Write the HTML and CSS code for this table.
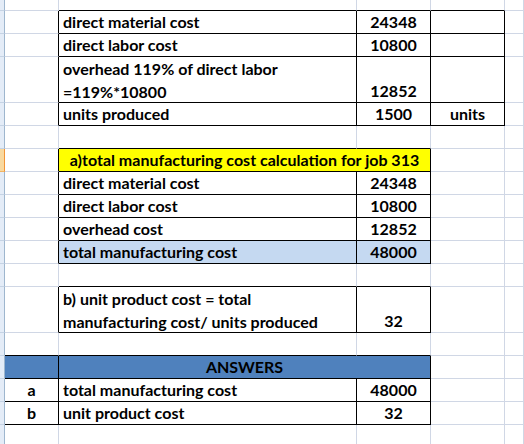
FILE: index.html
```html
<!DOCTYPE html>
<html lang="en">
<head>
    <meta charset="UTF-8">
    <title>Job 313 cost sheet</title>
    <link rel="stylesheet" href="styles.css">
</head>
<body>
    <div class="sheet">
        <!-- row 0 (scrolled, partly hidden) -->
        <div class="c rh"></div>
        <div class="c"></div>
        <div class="c bb"></div>
        <div class="c bb"></div>
        <div class="c bb"></div>
        <div class="c"></div>

        <!-- input data -->
        <div class="c rh"></div>
        <div class="c br"></div>
        <div class="c br bb">direct material cost</div>
        <div class="c br bb num">24348</div>
        <div class="c br bb"></div>
        <div class="c"></div>

        <div class="c rh"></div>
        <div class="c br"></div>
        <div class="c br bb">direct labor cost</div>
        <div class="c br bb num">10800</div>
        <div class="c br bb"></div>
        <div class="c"></div>

        <div class="c rh"></div>
        <div class="c br"></div>
        <div class="c br bb"><span class="lines">overhead 119% of direct labor<br>=119%*10800</span></div>
        <div class="c br bb num">12852</div>
        <div class="c br bb"></div>
        <div class="c"></div>

        <div class="c rh"></div>
        <div class="c br"></div>
        <div class="c br bb">units produced</div>
        <div class="c br bb num">1500</div>
        <div class="c br bb num">units</div>
        <div class="c"></div>

        <div class="c rh"></div>
        <div class="c"></div>
        <div class="c bb"></div>
        <div class="c bb"></div>
        <div class="c"></div>
        <div class="c"></div>

        <!-- a) total manufacturing cost -->
        <div class="c rh sel"></div>
        <div class="c br"></div>
        <div class="c br bb span2 ctr yellow">a)total manufacturing cost calculation for job 313</div>
        <div class="c"></div>
        <div class="c"></div>

        <div class="c rh"></div>
        <div class="c br"></div>
        <div class="c br bb">direct material cost</div>
        <div class="c br bb num">24348</div>
        <div class="c"></div>
        <div class="c"></div>

        <div class="c rh"></div>
        <div class="c br"></div>
        <div class="c br bb">direct labor cost</div>
        <div class="c br bb num">10800</div>
        <div class="c"></div>
        <div class="c"></div>

        <div class="c rh"></div>
        <div class="c br"></div>
        <div class="c br bb">overhead cost</div>
        <div class="c br bb num">12852</div>
        <div class="c"></div>
        <div class="c"></div>

        <div class="c rh"></div>
        <div class="c br"></div>
        <div class="c br bb pale">total manufacturing cost</div>
        <div class="c br bb num pale">48000</div>
        <div class="c"></div>
        <div class="c"></div>

        <div class="c rh"></div>
        <div class="c"></div>
        <div class="c bb"></div>
        <div class="c bb"></div>
        <div class="c"></div>
        <div class="c"></div>

        <!-- b) unit product cost -->
        <div class="c rh"></div>
        <div class="c br"></div>
        <div class="c br bb"><span class="lines">b) unit product cost = total<br>manufacturing cost/ units produced</span></div>
        <div class="c br bb num">32</div>
        <div class="c"></div>
        <div class="c"></div>

        <div class="c rh"></div>
        <div class="c bb"></div>
        <div class="c bb"></div>
        <div class="c bb"></div>
        <div class="c"></div>
        <div class="c"></div>

        <!-- answers -->
        <div class="c rh"></div>
        <div class="c br bb blue"></div>
        <div class="c br bb span2 ctr blue">ANSWERS</div>
        <div class="c"></div>
        <div class="c"></div>

        <div class="c rh"></div>
        <div class="c br bb ctr">a</div>
        <div class="c br bb">total manufacturing cost</div>
        <div class="c br bb num">48000</div>
        <div class="c"></div>
        <div class="c"></div>

        <div class="c rh"></div>
        <div class="c br bb ctr">b</div>
        <div class="c br bb">unit product cost</div>
        <div class="c br bb num">32</div>
        <div class="c"></div>
        <div class="c"></div>

        <div class="c rh"></div>
        <div class="c"></div>
        <div class="c"></div>
        <div class="c"></div>
        <div class="c"></div>
        <div class="c"></div>
    </div>
</body>
</html>
```

FILE: styles.css
```css
body {
    margin: 0;
    background: #fff;
    overflow: hidden;
    font-family: Lato, "Liberation Sans", sans-serif;
    font-weight: bold;
    font-size: 16px;
    color: #000;
}

.sheet {
    display: grid;
    width: 524px;
    grid-template-columns: 5px 54px 298px 74px 74px 1fr;
    grid-template-rows: 11px 23px 23px 46px 23px 23px 23px 23px 23px 23px 23px 23px 46px 23px 23px 23px 23px 23px;
}

/* one spreadsheet cell: gridline on right and bottom */
.c {
    box-sizing: border-box;
    display: flex;
    align-items: flex-end;
    padding: 0 4px;
    line-height: 22px;
    white-space: nowrap;
    overflow: hidden;
    border-right: 1px solid #d0d7e5;
    border-bottom: 1px solid #d0d7e5;
}

.lines {
    line-height: 23px;
    margin-bottom: -1px;
}

/* row header edge */
.rh {
    padding: 0;
    background: #e4ecf7;
    border-right-color: #9eb6ce;
    border-bottom-color: #c5d3e4;
}

.rh.sel {
    background: #f9d99f;
    border-right-color: #f29436;
    border-bottom-color: #f2b464;
}

/* black cell borders */
.br {
    border-right-color: #000;
}

.bb {
    border-bottom-color: #000;
}

.num,
.ctr {
    justify-content: center;
}

.span2 {
    grid-column: span 2;
}

.yellow {
    background: #ffff00;
}

.pale {
    background: #c5d9f1;
}

.blue {
    background: #4f81bd;
}
```
